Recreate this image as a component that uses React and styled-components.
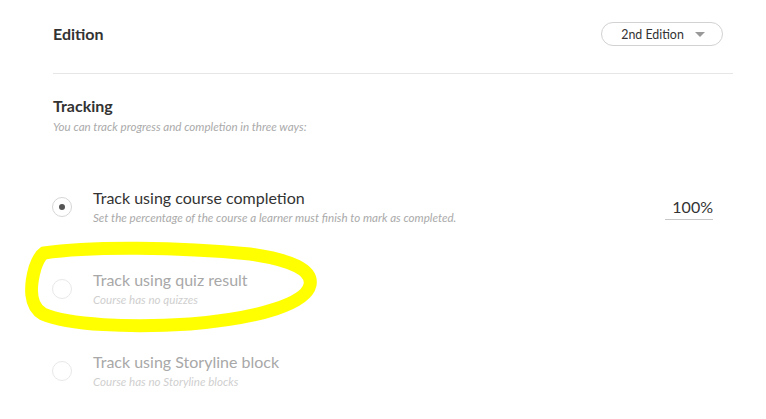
import React from "react";
import styled, { createGlobalStyle } from "styled-components";

const Global = createGlobalStyle`
  html, body { margin: 0; padding: 0; background: #fff; }
  body { font-family: Lato, "Open Sans", sans-serif; color: #333; }
`;

const Page = styled.div`
  position: relative;
  width: 766px;
  height: 419px;
  overflow: hidden;
`;

const Content = styled.div`
  width: 680px;
  padding-left: 53px;
`;

const EditionRow = styled.div`
  display: flex;
  align-items: center;
  justify-content: space-between;
  height: 24px;
  padding: 22px 10px 27px 0;
`;

const SectionTitle = styled.h2`
  margin: 0;
  font-size: 16px;
  line-height: 20px;
  font-weight: 700;
  color: #333;
`;

const Dropdown = styled.button`
  box-sizing: border-box;
  width: 122px;
  height: 24px;
  border: 1px solid #d2d2d2;
  border-radius: 12px;
  background: #fff;
  display: flex;
  align-items: center;
  justify-content: center;
  gap: 11px;
  padding: 0 0 0 2px;
  font-family: Lato, sans-serif;
  font-size: 12.4px;
  color: #333;
`;

const Caret = styled.span`
  width: 0;
  height: 0;
  border-left: 5px solid transparent;
  border-right: 5px solid transparent;
  border-top: 5px solid #999;
  margin-top: 1px;
`;

const Divider = styled.hr`
  margin: 0;
  border: 0;
  border-top: 1px solid #e6e6e6;
`;

const Tracking = styled.div`
  padding-top: 22px;
`;

const Hint = styled.p`
  margin: 4px 0 0;
  font-size: 11.6px;
  line-height: 14px;
  font-style: italic;
  color: ${(p) => (p.$muted ? "#cfcfcf" : "#aaa")};
`;

const Options = styled.div`
  display: flex;
  flex-direction: column;
  gap: 45px;
  margin-top: 54px;
  width: 660px;
`;

const Option = styled.div`
  display: flex;
  align-items: center;
`;

const Radio = styled.span`
  box-sizing: border-box;
  width: 20px;
  height: 20px;
  margin-left: -1px;
  border: 1px solid ${(p) => (p.$disabled ? "#e8e8e8" : "#d6d6d6")};
  border-radius: 50%;
  display: flex;
  align-items: center;
  justify-content: center;
  flex-shrink: 0;
  &::after {
    content: "";
    width: 6px;
    height: 6px;
    border-radius: 50%;
    background: #555;
    display: ${(p) => (p.$checked ? "block" : "none")};
  }
`;

const OptionText = styled.div`
  margin-left: 21px;
  flex: 1;
`;

const OptionTitle = styled.div`
  font-size: 16px;
  line-height: 20px;
  color: ${(p) => (p.$disabled ? "#a8a8a8" : "#333")};
`;

const OptionHint = styled(Hint)`
  margin-top: 3px;
`;

const Percent = styled.div`
  width: 48px;
  text-align: right;
  font-size: 16px;
  line-height: 20px;
  color: #333;
  border-bottom: 1px solid #c8c8c8;
  padding-bottom: 2px;
  margin-top: 4px;
`;

const Annotation = styled.svg`
  position: absolute;
  left: 0;
  top: 0;
  pointer-events: none;
`;

const options = [
  {
    title: "Track using course completion",
    hint: "Set the percentage of the course a learner must finish to mark as completed.",
    checked: true,
    value: "100%",
  },
  { title: "Track using quiz result", hint: "Course has no quizzes", disabled: true },
  { title: "Track using Storyline block", hint: "Course has no Storyline blocks", disabled: true },
];

export default function App() {
  return (
    <Page>
      <Global />
      <Content>
        <EditionRow>
          <SectionTitle>Edition</SectionTitle>
          <Dropdown>
            2nd Edition
            <Caret />
          </Dropdown>
        </EditionRow>
        <Divider />
        <Tracking>
          <SectionTitle>Tracking</SectionTitle>
          <Hint>You can track progress and completion in three ways:</Hint>
          <Options>
            {options.map((o) => (
              <Option key={o.title}>
                <Radio $checked={o.checked} $disabled={o.disabled} />
                <OptionText>
                  <OptionTitle $disabled={o.disabled}>{o.title}</OptionTitle>
                  <OptionHint $muted={o.disabled}>{o.hint}</OptionHint>
                </OptionText>
                {o.value && <Percent>{o.value}</Percent>}
              </Option>
            ))}
          </Options>
        </Tracking>
      </Content>
      <Annotation width="766" height="419" viewBox="0 0 766 419">
        <path
          d="M44 253 C 90 246, 180 247, 250 254 C 292 260, 313 270, 310 285 C 306 303, 262 318, 190 324 C 130 328, 68 325, 43 314 C 29 306, 30 286, 35 268 C 38 259, 41 255, 44 253 Z"
          fill="none"
          stroke="#ffff00"
          strokeWidth="13"
          strokeLinejoin="round"
        />
      </Annotation>
    </Page>
  );
}
